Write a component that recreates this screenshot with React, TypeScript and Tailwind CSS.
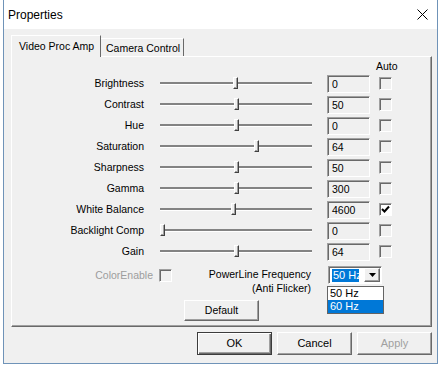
import React from 'react';

const rows = [
  { label: 'Brightness', value: '0', thumb: 75, auto: false },
  { label: 'Contrast', value: '50', thumb: 76, auto: false },
  { label: 'Hue', value: '0', thumb: 76, auto: false },
  { label: 'Saturation', value: '64', thumb: 96, auto: false },
  { label: 'Sharpness', value: '50', thumb: 76, auto: false },
  { label: 'Gamma', value: '300', thumb: 76, auto: false },
  { label: 'White Balance', value: '4600', thumb: 73, auto: true },
  { label: 'Backlight Comp', value: '0', thumb: 2, auto: false },
  { label: 'Gain', value: '64', thumb: 76, auto: false },
];

const sunken =
  'border border-[#a0a0a0] border-r-white border-b-white shadow-[inset_1px_1px_0_#696969]';
const raised =
  'border border-white border-r-[#696969] border-b-[#696969] shadow-[inset_-1px_-1px_0_#a0a0a0]';

const CheckBox: React.FC<{ checked?: boolean }> = ({ checked }) => (
  <div
    className={`w-[13px] h-[13px] flex items-center justify-center ${sunken} ${
      checked ? 'bg-white' : 'bg-[#f0f0f0]'
    }`}
  >
    {checked && (
      <svg width="9" height="9" viewBox="0 0 9 9">
        <path d="M1 4 L3.5 6.5 L8 1.5" fill="none" stroke="#000" strokeWidth="2" />
      </svg>
    )}
  </div>
);

const Slider: React.FC<{ thumb: number }> = ({ thumb }) => (
  <div className="relative w-[156px] h-[21px] flex items-center px-[2px]">
    <div className="w-full h-[3px] bg-white border-t-2 border-[#838383]" />
    <div
      className="absolute top-[4px] w-[5px] h-[12px] bg-[#f0f0f0] border border-white border-r-[#404040] border-b-[#404040] shadow-[inset_-1px_-1px_0_#a0a0a0]"
      style={{ left: thumb }}
    />
  </div>
);

export default function App() {
  return (
    <div
      className="w-[441px] h-[365px] bg-white text-[10.5px] text-black overflow-hidden"
      style={{ fontFamily: '"Liberation Sans", Arial, sans-serif' }}
    >
      <div className="ml-[3px] w-[435px] h-[364px] border-l border-r border-b border-[#6f93b8] bg-[#f0f0f0] flex flex-col">
        {/* title bar */}
        <div className="h-[29px] bg-white flex items-center justify-between pl-[4px] pr-[9px]">
          <span className="text-[12px]">Properties</span>
          <svg width="11" height="11" viewBox="0 0 11 11">
            <path d="M0.5 0.5 L10.5 10.5 M10.5 0.5 L0.5 10.5" stroke="#000" strokeWidth="1" />
          </svg>
        </div>

        <div className="pl-[7px] pr-[5px] pt-[6px]">
          {/* tabs */}
          <div className="flex items-end h-[21px] whitespace-nowrap">
            <div className="relative z-10 -mb-px h-[22px] w-[90px] bg-[#f0f0f0] border-l border-t border-white border-r border-r-[#696969] pl-[7px] pt-[3px]">
              Video Proc Amp
            </div>
            <div className="h-[18px] w-[83px] border-t border-white border-r border-r-[#696969] pl-[5px] pt-[2px]">
              Camera Control
            </div>
          </div>

          {/* panel */}
          <div className="h-[271px] border border-white border-r-[#696969] border-b-[#696969] shadow-[inset_-1px_-1px_0_#a0a0a0]">
            <div className="pt-[3px] pl-[364px] h-[16px] leading-[13px]">Auto</div>
            {rows.map((r) => (
              <div key={r.label} className="flex items-center h-[21px]">
                <div className="w-[132px] text-right">{r.label}</div>
                <div className="ml-[14px]">
                  <Slider thumb={r.thumb} />
                </div>
                <div className={`ml-[13px] w-[43px] h-[18px] pl-[4px] leading-[16px] ${sunken}`}>
                  {r.value}
                </div>
                <div className="ml-[9px]">
                  <CheckBox checked={r.auto} />
                </div>
              </div>
            ))}

            <div className="flex items-start mt-[4px]">
              <div className="w-[141px] text-right mt-[3px] leading-[13px] text-[#9d9d9d]">
                ColorEnable
              </div>
              <div className="ml-[6px] mt-[3px]">
                <CheckBox />
              </div>
              <div className="w-[139px] text-right leading-[14px] mt-[1px]">
                <div>PowerLine Frequency</div>
                <div>(Anti Flicker)</div>
              </div>
              <div className={`relative ml-[17px] w-[54px] h-[18px] bg-white flex items-center ${sunken}`}>
                <div className="ml-[3px] w-[27px] h-[13px] bg-[#0078d7] text-white text-[11px] leading-[13px] overflow-hidden whitespace-nowrap pl-[1px]">
                  50 Hz
                </div>
                <div className={`ml-auto mr-[1px] w-[16px] h-[14px] bg-[#f0f0f0] flex items-center justify-center ${raised}`}>
                  <svg width="7" height="4" viewBox="0 0 7 4">
                    <path d="M0 0 L7 0 L3.5 4 Z" fill="#000" />
                  </svg>
                </div>
                <div className="absolute z-20 left-[-2px] top-[19px] w-[57px] border border-[#646464] bg-white text-[11px] leading-[13px]">
                  <div className="h-[13px] pl-[2px]">50 Hz</div>
                  <div className="h-[13px] pl-[2px] bg-[#0078d7] text-white">60 Hz</div>
                </div>
              </div>
            </div>

            <div className={`ml-[172px] mt-[5px] w-[75px] h-[21px] flex items-center justify-center ${raised}`}>
              Default
            </div>
          </div>

          {/* dialog buttons */}
          <div className="flex justify-end gap-[5px] mt-[5px] text-[11px]">
            <div className="w-[75px] h-[23px] flex items-center justify-center border border-[#3c3c3c] shadow-[inset_1px_1px_0_#fff,inset_-1px_-1px_0_#696969,inset_-2px_-2px_0_#a0a0a0]">
              OK
            </div>
            <div className={`w-[75px] h-[23px] flex items-center justify-center ${raised}`}>Cancel</div>
            <div className={`w-[75px] h-[23px] flex items-center justify-center text-[#a0a0a0] ${raised}`}>
              Apply
            </div>
          </div>
        </div>
      </div>
    </div>
  );
}
